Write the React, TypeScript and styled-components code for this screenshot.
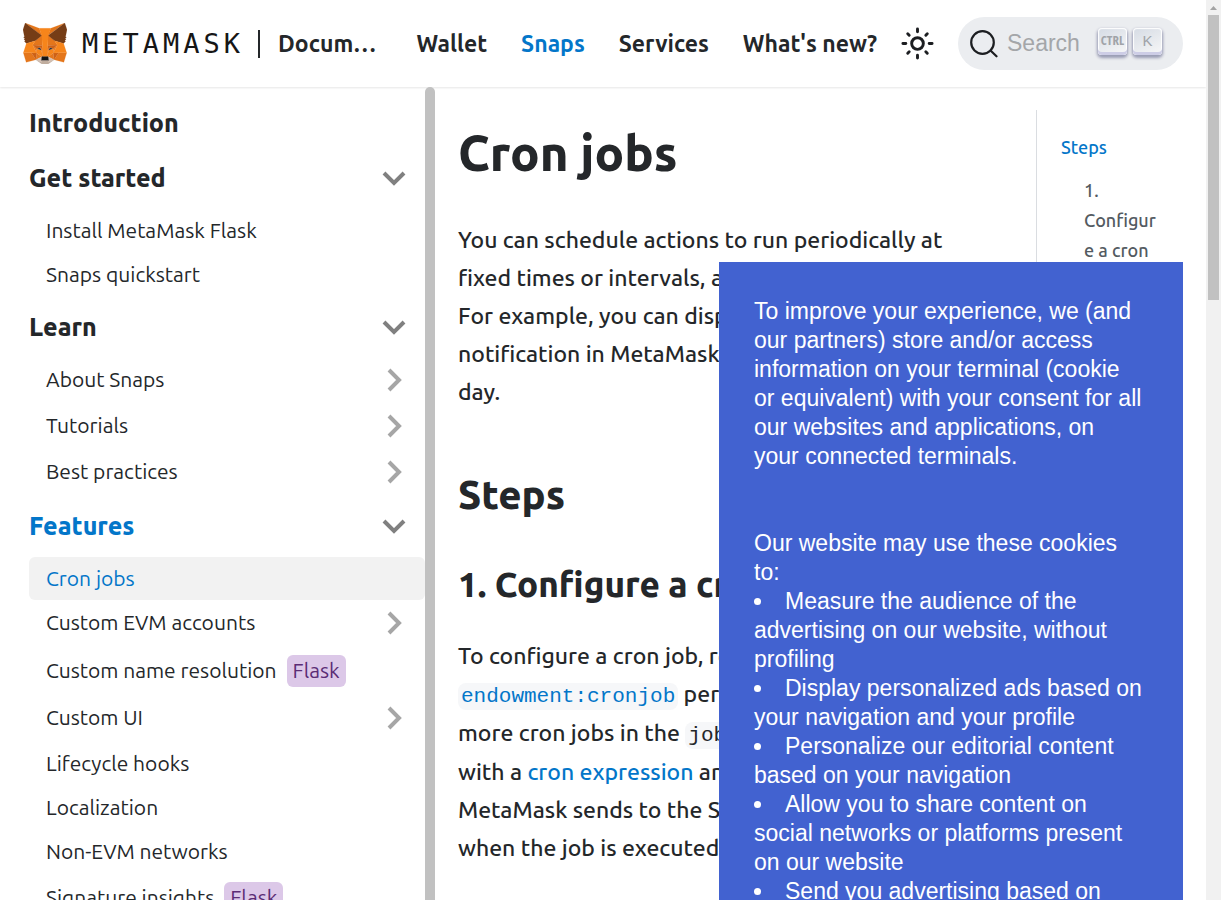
import React from "react";
import styled, { createGlobalStyle } from "styled-components";

const blue = "#0376c9";
const ink = "#24272a";
const sans = `"Ubuntu", "Noto Sans", sans-serif`;
const arial = `"Liberation Sans", Arial, sans-serif`;

const GlobalStyle = createGlobalStyle`
  * { box-sizing: border-box; }
  body { margin: 0; background: #fff; color: ${ink}; font-family: ${sans}; font-weight: 500; }
  a { color: inherit; text-decoration: none; }
  ul { list-style: none; margin: 0; padding: 0; }
  button { font: inherit; color: inherit; background: none; border: 0; padding: 0; cursor: pointer; }
`;

const Viewport = styled.div`
  display: flex;
  height: 100vh;
  overflow: hidden;
`;

const Page = styled.div`
  flex: 1;
  min-width: 0;
  display: flex;
  flex-direction: column;
`;

const PageScrollbar = styled.div`
  width: 15px;
  background: #f1f1f1;
  display: flex;
  flex-direction: column;
  align-items: center;
`;

const ScrollArrow = styled.svg`
  width: 15px;
  height: 15px;
  flex: none;
`;

const ScrollThumb = styled.div`
  width: 11px;
  height: 285px;
  background: #c1c1c1;
`;

const Header = styled.header`
  height: 87px;
  flex: none;
  display: flex;
  align-items: center;
  padding: 0 23px;
  box-shadow: 0 1px 2px rgba(0, 0, 0, 0.1);
  font-size: 23px;
  font-weight: 600;
  white-space: nowrap;
`;

const Brand = styled.a`
  display: flex;
  align-items: center;
  flex: 1;
  min-width: 0;
`;

const Wordmark = styled.span`
  margin-left: 15px;
  font-family: "DejaVu Sans Mono", monospace;
  font-size: 27px;
  font-weight: 400;
  letter-spacing: 4px;
  color: #161616;
`;

const Divider = styled.span`
  width: 2px;
  height: 28px;
  flex: none;
  margin: 0 18px 0 14px;
  background: ${ink};
`;

const SiteTitle = styled.span`
  overflow: hidden;
  text-overflow: ellipsis;
`;

const Nav = styled.nav`
  display: flex;
  gap: 34px;
  margin-left: 37px;
`;

const NavLink = styled.a<{ $active?: boolean }>`
  color: ${(p) => (p.$active ? blue : ink)};
`;

const ThemeButton = styled.button`
  display: flex;
  margin: 0 23px;
`;

const SearchButton = styled.button`
  display: flex;
  align-items: center;
  width: 225px;
  height: 53px;
  flex: none;
  padding: 0 21px 0 12px;
  border-radius: 27px;
  background: #ebedf0;
  font-family: ${arial};
  font-size: 23px;
  font-weight: 400;
  color: #a4a6a9;
`;

const SearchLabel = styled.span`
  flex: 1;
  text-align: left;
  margin-left: 9px;
`;

const Key = styled.kbd`
  display: flex;
  align-items: center;
  justify-content: center;
  width: 29px;
  height: 27px;
  margin: 0 0 4px 6px;
  padding-bottom: 3px;
  border-radius: 4px;
  background: linear-gradient(-26deg, #f8f8f8, #d5dbe4);
  box-shadow: inset 0 -3px 0 #cdcde6, inset 0 0 1px 1px #fff,
    0 2px 3px 1px rgba(30, 35, 90, 0.4);
  color: #a0a3a8;
  font-family: ${arial};
  font-size: 15px;
`;

const ModifierKey = styled(Key)`
  font-family: "Open Sans Condensed", "Roboto Condensed", ${arial};
  font-size: 13px;
  font-weight: 700;
`;

const Body = styled.div`
  flex: 1;
  min-height: 0;
  display: flex;
`;

const Sidebar = styled.aside`
  width: 435px;
  flex: none;
  display: flex;
  overflow: hidden;
`;

const SidebarNav = styled.nav`
  flex: 1;
  padding: 11px 0 0 29px;
`;

const SidebarThumb = styled.div`
  width: 10px;
  border-radius: 5px 5px 0 0;
  background: #c1c1c1;
`;

const SectionRow = styled.div<{ $active?: boolean; $plain?: boolean }>`
  display: flex;
  align-items: center;
  justify-content: space-between;
  height: ${(p) => (p.$plain ? 49 : 61)}px;
  padding-right: 19px;
  font-size: 25px;
  font-weight: 800;
  color: ${(p) => (p.$active ? blue : ink)};
`;

const rowHeight = { leaf: 43, group: 46, badge: 49 };

const ItemRow = styled.li<{ $kind: keyof typeof rowHeight; $active?: boolean }>`
  display: flex;
  align-items: center;
  height: ${(p) => rowHeight[p.$kind]}px;
  margin-top: ${(p) => (p.$kind === "leaf" ? 1 : 0)}px;
  padding: 0 19px 0 17px;
  border-radius: 6px;
  font-size: 21px;
  font-weight: 400;
  background: ${(p) => (p.$active ? "#f2f2f2" : "transparent")};
  color: ${(p) => (p.$active ? blue : ink)};
`;

const ItemLink = styled.a`
  flex: none;
  padding-bottom: 2px;
`;

const ToggleButton = styled.button`
  display: flex;
  margin-left: auto;
`;

const Badge = styled.span`
  height: 32px;
  line-height: 31px;
  margin-left: 10px;
  padding: 0 6px;
  border-radius: 6px;
  background: #dcc8e8;
  color: #5b2c75;
`;

const Article = styled.main`
  flex: 1;
  min-width: 0;
  padding: 24px 58px 0 23px;
  font-size: 23px;
  line-height: 38px;
`;

const Title = styled.h1`
  margin: 6px 0 32px;
  font-size: 49px;
  font-weight: 800;
  line-height: 72px;
`;

const Heading = styled.h2`
  margin: 56px 0 37px;
  font-size: 40px;
  font-weight: 800;
  line-height: 56px;
`;

const SubHeading = styled.h3`
  margin: 0 0 29px;
  font-size: 35px;
  font-weight: 800;
  line-height: 48px;
  white-space: nowrap;
`;

const Paragraph = styled.p`
  margin: 0;
  white-space: nowrap;
`;

const Link = styled.a`
  color: ${blue};
`;

const Code = styled.code`
  padding: 2px 3px;
  border-radius: 8px;
  background: #f6f7f9;
  font-family: "Liberation Mono", monospace;
  font-size: 21px;
  font-weight: 400;
  line-height: 34px;
`;

const Toc = styled.aside`
  width: 170px;
  flex: none;
  margin-top: 23px;
  padding: 22px 46px 0 24px;
  border-left: 1px solid #dadde1;
  font-size: 18px;
  line-height: 30px;
  color: #535a61;
`;

const TocSub = styled.ul`
  margin-top: 13px;
  padding-left: 23px;
  overflow-wrap: break-word;
`;

const CookieNotice = styled.section`
  position: fixed;
  top: 262px;
  right: 38px;
  bottom: 0;
  width: 464px;
  padding: 35px 39px 0 35px;
  overflow: hidden;
  background: #4262d0;
  color: #fff;
  font-family: ${arial};
  font-size: 23px;
  font-weight: 400;
  line-height: 29px;
`;

const NoticeText = styled.p`
  margin: 0;
  & + & {
    margin-top: 58px;
  }
`;

const NoticeItem = styled.li`
  &::before {
    content: "";
    display: inline-block;
    width: 7px;
    height: 7px;
    margin-right: 24px;
    border-radius: 50%;
    background: #fff;
    vertical-align: 4px;
  }
`;

const foxShapes: [string, string[]][] = [
  ["#e2761b", ["274.1 35.5 174.6 109.4 193 65.8"]],
  ["#e4761b", [
    "44.4 35.5 143.1 110.1 125.6 65.8",
    "238.3 206.8 211.8 247.4 268.5 263 284.8 207.7",
    "33.9 207.7 50.1 263 106.8 247.4 80.3 206.8",
    "103.6 138.2 87.8 162.1 144.1 164.6 142.1 104.1",
    "214.9 138.2 175.9 103.4 174.6 164.6 230.8 162.1",
    "106.8 247.4 140.6 230.9 111.4 208.1",
    "177.9 230.9 211.8 247.4 207.1 208.1",
  ]],
  ["#d7c1b3", [
    "211.8 247.4 177.9 230.9 180.6 253 180.3 262.3",
    "106.8 247.4 138.3 262.3 138.1 253 140.6 230.9",
  ]],
  ["#233447", ["138.8 193.5 110.6 185.2 130.5 176.1", "179.7 193.5 188 176.1 208 185.2"]],
  ["#cd6116", [
    "106.8 247.4 111.6 206.8 80.3 207.7",
    "207 206.8 211.8 247.4 238.3 207.7",
    "230.8 162.1 174.6 164.6 179.8 193.5 188.1 176.1 208.1 185.2",
    "110.6 185.2 130.6 176.1 138.8 193.5 144.1 164.6 87.8 162.1",
  ]],
  ["#e4751f", [
    "87.8 162.1 111.4 208.1 110.6 185.2",
    "208.1 185.2 207.1 208.1 230.8 162.1",
    "144.1 164.6 138.8 193.5 145.4 227.6 146.9 182.7",
    "174.6 164.6 171.9 182.6 173.1 227.6 179.8 193.5",
  ]],
  ["#f6851b", [
    "179.8 193.5 173.1 227.6 177.9 230.9 207.1 208.1 208.1 185.2",
    "110.6 185.2 111.4 208.1 140.6 230.9 145.4 227.6 138.8 193.5",
  ]],
  ["#c0ad9e", [
    "180.3 262.3 180.6 253 178.1 250.8 140.4 250.8 138.1 253 138.3 262.3 106.8 247.4 117.8 256.4 140.1 271.9 178.4 271.9 200.8 256.4 211.8 247.4",
  ]],
  ["#161616", ["177.9 230.9 173.1 227.6 145.4 227.6 140.6 230.9 138.1 253 140.4 250.8 178.1 250.8 180.6 253"]],
  ["#763d16", [
    "278.3 114.2 286.8 73.4 274.1 35.5 177.9 106.9 214.9 138.2 267.2 153.5 278.8 140 273.8 136.4 281.8 129.1 275.6 124.3 283.6 118.2",
    "31.8 73.4 40.3 114.2 34.9 118.2 42.9 124.3 36.8 129.1 44.8 136.4 39.8 140 51.3 153.5 103.6 138.2 140.6 106.9 44.4 35.5",
  ]],
  ["#f6851b", [
    "267.2 153.5 214.9 138.2 230.8 162.1 207.1 208.1 238.3 207.7 284.8 207.7",
    "103.6 138.2 51.3 153.5 33.9 207.7 80.3 207.7 111.4 208.1 87.8 162.1",
    "174.6 164.6 177.9 106.9 193.1 65.8 125.6 65.8 140.6 106.9 144.1 164.6 145.3 182.8 145.4 227.6 173.1 227.6 173.3 182.8",
  ]],
];

const FoxSvg = styled.svg`
  flex: none;
`;

function Fox() {
  return (
    <FoxSvg width="44" height="41" viewBox="31.8 35.5 255 236.4" aria-hidden="true">
      {foxShapes.map(([fill, shapes]) =>
        shapes.map((points) => (
          <polygon key={points} points={points} fill={fill} stroke={fill} strokeLinejoin="round" />
        ))
      )}
    </FoxSvg>
  );
}

function Sun() {
  return (
    <svg width="35" height="35" viewBox="0 0 24 24" fill="none" stroke="#1c1e21" strokeWidth="2" strokeLinecap="round" aria-hidden="true">
      <circle cx="12" cy="12" r="4" />
      <path d="M2 12h2M20 12h2M12 2v2M12 20v2M5.3 5.3l1 1M17.7 17.7l1 1M5.3 18.7l1-1M17.7 6.3l1-1" />
    </svg>
  );
}

function SearchIcon() {
  return (
    <svg width="28" height="28" viewBox="0 0 28 28" fill="none" stroke="#1c1e21" strokeWidth="2.2" strokeLinecap="round" aria-hidden="true">
      <circle cx="12.5" cy="12.5" r="11.3" />
      <path d="M20.5 20.5 26.5 26.3" />
    </svg>
  );
}

function Chevron({ open }: { open?: boolean }) {
  return (
    <svg width="24" height="24" viewBox="0 0 24 24" fill="none" stroke={open ? "#808080" : "#a6a6a6"} strokeWidth="4" aria-hidden="true">
      <path d={open ? "M2 7l10 10L22 7" : "M7 2l10 10L7 22"} />
    </svg>
  );
}

type Item = { label: string; group?: boolean; flask?: boolean; active?: boolean };
type Section = { label: string; active?: boolean; items?: Item[] };

const sections: Section[] = [
  { label: "Introduction" },
  { label: "Get started", items: [{ label: "Install MetaMask Flask" }, { label: "Snaps quickstart" }] },
  {
    label: "Learn",
    items: [
      { label: "About Snaps", group: true },
      { label: "Tutorials", group: true },
      { label: "Best practices", group: true },
    ],
  },
  {
    label: "Features",
    active: true,
    items: [
      { label: "Cron jobs", active: true },
      { label: "Custom EVM accounts", group: true },
      { label: "Custom name resolution", flask: true },
      { label: "Custom UI", group: true },
      { label: "Lifecycle hooks" },
      { label: "Localization" },
      { label: "Non-EVM networks" },
      { label: "Signature insights", flask: true },
    ],
  },
];

const purposes = [
  "Measure the audience of the advertising on our website, without profiling",
  "Display personalized ads based on your navigation and your profile",
  "Personalize our editorial content based on your navigation",
  "Allow you to share content on social networks or platforms present on our website",
  "Send you advertising based on your location",
];

export default function App() {
  return (
    <>
      <GlobalStyle />
      <Viewport>
        <Page>
          <Header>
            <Brand href="#">
              <Fox />
              <Wordmark>METAMASK</Wordmark>
              <Divider />
              <SiteTitle>Documentation</SiteTitle>
            </Brand>
            <Nav aria-label="Main">
              <NavLink href="#wallet">Wallet</NavLink>
              <NavLink href="#snaps" $active>Snaps</NavLink>
              <NavLink href="#services">Services</NavLink>
              <NavLink href="#new">What's new?</NavLink>
            </Nav>
            <ThemeButton aria-label="Switch theme">
              <Sun />
            </ThemeButton>
            <SearchButton>
              <SearchIcon />
              <SearchLabel>Search</SearchLabel>
              <ModifierKey>CTRL</ModifierKey>
              <Key>K</Key>
            </SearchButton>
          </Header>
          <Body>
            <Sidebar>
              <SidebarNav aria-label="Docs">
                {sections.map((s) => (
                  <React.Fragment key={s.label}>
                    <SectionRow $active={s.active} $plain={!s.items}>
                      <a href="#">{s.label}</a>
                      {s.items && (
                        <ToggleButton aria-label={`Toggle ${s.label}`}>
                          <Chevron open />
                        </ToggleButton>
                      )}
                    </SectionRow>
                    {s.items && (
                      <ul>
                        {s.items.map((i) => (
                          <ItemRow key={i.label} $active={i.active} $kind={i.group ? "group" : i.flask ? "badge" : "leaf"}>
                            <ItemLink href="#">{i.label}</ItemLink>
                            {i.flask && <Badge>Flask</Badge>}
                            {i.group && (
                              <ToggleButton aria-label={`Expand ${i.label}`}>
                                <Chevron />
                              </ToggleButton>
                            )}
                          </ItemRow>
                        ))}
                      </ul>
                    )}
                  </React.Fragment>
                ))}
              </SidebarNav>
              <SidebarThumb />
            </Sidebar>
            <Article>
              <Title>Cron jobs</Title>
              <Paragraph>
                You can schedule actions to run periodically at
                <br />
                fixed times or intervals, also known as "cron jobs."
                <br />
                For example, you can display a dialog or
                <br />
                notification in MetaMask at a specific time every
                <br />
                day.
              </Paragraph>
              <Heading>Steps</Heading>
              <SubHeading>1. Configure a cron job</SubHeading>
              <Paragraph>
                To configure a cron job, request the
                <br />
                <Link href="#endowment"><Code>endowment:cronjob</Code></Link> permission. Specify one or
                <br />
                more cron jobs in the <Code>jobs</Code> array. Each job,
                <br />
                with a <Link href="#expr">cron expression</Link> and a request that
                <br />
                MetaMask sends to the Snap, is handled
                <br />
                when the job is executed.
              </Paragraph>
            </Article>
            <Toc>
              <Link href="#steps">Steps</Link>
              <TocSub>
                <li>
                  <a href="#configure">1. Configure a cron job</a>
                </li>
              </TocSub>
            </Toc>
          </Body>
        </Page>
        <PageScrollbar>
          <ScrollArrow viewBox="0 0 15 15" aria-hidden="true">
            <path d="M4 10l3.5-4L11 10z" fill="#a3a3a3" />
          </ScrollArrow>
          <ScrollThumb />
        </PageScrollbar>
      </Viewport>
      <CookieNotice role="dialog" aria-label="Cookies">
        <NoticeText>
          To improve your experience, we (and our partners) store and/or access information on your terminal (cookie or
          equivalent) with your consent for all our websites and applications, on your connected terminals.
        </NoticeText>
        <NoticeText>Our website may use these cookies to:</NoticeText>
        <ul>
          {purposes.map((p) => (
            <NoticeItem key={p}>{p}</NoticeItem>
          ))}
        </ul>
      </CookieNotice>
    </>
  );
}
